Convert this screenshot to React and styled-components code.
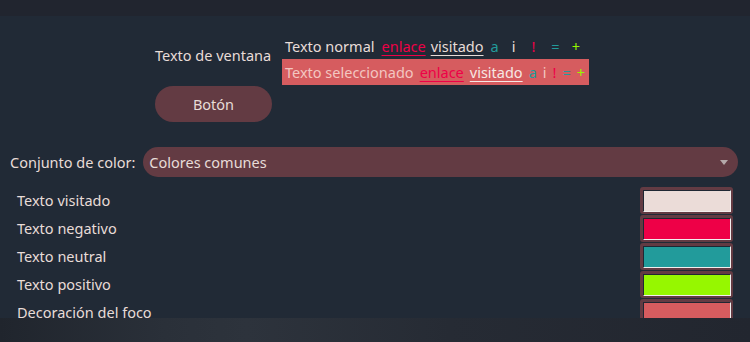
import React from "react";
import styled, { createGlobalStyle } from "styled-components";

const GlobalStyle = createGlobalStyle`
  html, body {
    margin: 0;
    padding: 0;
    background: #21262f;
  }
  body {
    font-family: "Noto Sans", "DejaVu Sans", sans-serif;
    font-size: 14.5px;
    color: #e8dcd8;
  }
`;

const Window = styled.div`
  width: 750px;
  height: 342px;
  display: flex;
  flex-direction: column;
  overflow: hidden;
`;

const TopStrip = styled.div`
  height: 16px;
  background: #21252f;
`;

const Panel = styled.div`
  flex: 1;
  min-height: 0;
  background: #212a36;
  display: flex;
  flex-direction: column;
  overflow: hidden;
`;

const Preview = styled.div`
  display: flex;
  justify-content: center;
  gap: 10px;
  padding: 17px 6px 0 0;
`;

const LeftColumn = styled.div`
  display: flex;
  flex-direction: column;
  width: 117px;
`;

const WindowLabel = styled.div`
  height: 20px;
  line-height: 20px;
  margin-top: 12px;
  white-space: nowrap;
`;

const Button = styled.button`
  margin-top: 21px;
  height: 36px;
  width: 117px;
  border: none;
  border-radius: 18px;
  background: #633b43;
  color: #e8dcd8;
  font: inherit;
  padding: 0;
`;

const RightColumn = styled.div`
  display: flex;
  flex-direction: column;
`;

const TextRow = styled.div`
  display: flex;
  align-items: center;
  height: 26px;
  padding: 0 4px 0 3px;
  gap: ${(p) => (p.$selected ? "6px" : "0")};
  background: ${(p) => (p.$selected ? "#d65c5f" : "transparent")};
  white-space: nowrap;
`;

const Word = styled.span`
  color: ${(p) => p.$color};
  margin-left: ${(p) => p.$ml || 0}px;
  text-decoration: ${(p) => (p.$underline ? "underline" : "none")};
  text-decoration-thickness: 1px;
  text-underline-offset: 3px;
`;

const SchemeRow = styled.div`
  display: flex;
  align-items: center;
  gap: 8px;
  margin-top: 25px;
  padding: 0 12px 0 10px;
`;

const SchemeLabel = styled.span`
  white-space: nowrap;
`;

const Combo = styled.div`
  flex: 1;
  height: 30px;
  border-radius: 15px;
  background: #633b43;
  display: flex;
  align-items: center;
  justify-content: space-between;
  padding: 0 10px 0 6px;
`;

const Arrow = styled.span`
  width: 0;
  height: 0;
  border-left: 4px solid transparent;
  border-right: 4px solid transparent;
  border-top: 5px solid #b5a9aa;
`;

const ColorList = styled.div`
  margin-top: 9px;
  display: flex;
  flex-direction: column;
`;

const ColorRow = styled.div`
  display: flex;
  align-items: center;
  justify-content: space-between;
  height: 28px;
  padding: 0 17px;
  flex-shrink: 0;
`;

const SwatchFrame = styled.div`
  width: 93px;
  height: 27px;
  box-sizing: border-box;
  padding: 3px 2px 2px 3px;
  border-radius: 3px;
  background: #633b43;
  display: flex;
`;

const SwatchFill = styled.div`
  flex: 1;
  background: ${(p) => p.$color};
  border-top: 1px solid #1f2733;
  border-left: 1px solid #1f2733;
  border-right: 1px solid #f2eeee;
  border-bottom: 1px solid #f2eeee;
`;

const Footer = styled.div`
  height: 24px;
  background: linear-gradient(90deg, #20252d 0%, #2a3039 22%, #2d333c 33%, #262b34 60%, #22262f 100%);
`;

const TEXT = "#e8dcd8";
const LINK = "#ee0047";
const TEAL = "#229b9b";
const LIME = "#96f700";

const colors = [
  ["Texto visitado", "#ebdcd8"],
  ["Texto negativo", "#ee0047"],
  ["Texto neutral", "#229b9b"],
  ["Texto positivo", "#96f700"],
  ["Decoración del foco", "#d65c5f"],
];

export default function App() {
  return (
    <>
      <GlobalStyle />
      <Window>
        <TopStrip />
        <Panel>
          <Preview>
            <LeftColumn>
              <WindowLabel>Texto de ventana</WindowLabel>
              <Button>Botón</Button>
            </LeftColumn>
            <RightColumn>
              <TextRow>
                <Word $color={TEXT}>Texto normal</Word>
                <Word $color={LINK} $ml={7} $underline>enlace</Word>
                <Word $color={TEXT} $ml={5} $underline>visitado</Word>
                <Word $color={TEAL} $ml={7}>a</Word>
                <Word $color={TEXT} $ml={13}>i</Word>
                <Word $color={LINK} $ml={16}>!</Word>
                <Word $color={TEAL} $ml={16}>=</Word>
                <Word $color={LIME} $ml={12}>+</Word>
              </TextRow>
              <TextRow $selected>
                <Word $color="#f3c6c1">Texto seleccionado</Word>
                <Word $color={LINK} $underline>enlace</Word>
                <Word $color="#f6e8e4" $underline>visitado</Word>
                <Word $color={TEAL}>a</Word>
                <Word $color="#f3c6c1">i</Word>
                <Word $color={LINK}>!</Word>
                <Word $color={TEAL}>=</Word>
                <Word $color={LIME}>+</Word>
              </TextRow>
            </RightColumn>
          </Preview>
          <SchemeRow>
            <SchemeLabel>Conjunto de color:</SchemeLabel>
            <Combo>
              <span>Colores comunes</span>
              <Arrow />
            </Combo>
          </SchemeRow>
          <ColorList>
            {colors.map(([name, c]) => (
              <ColorRow key={name}>
                <span>{name}</span>
                <SwatchFrame>
                  <SwatchFill $color={c} />
                </SwatchFrame>
              </ColorRow>
            ))}
          </ColorList>
        </Panel>
        <Footer />
      </Window>
    </>
  );
}
